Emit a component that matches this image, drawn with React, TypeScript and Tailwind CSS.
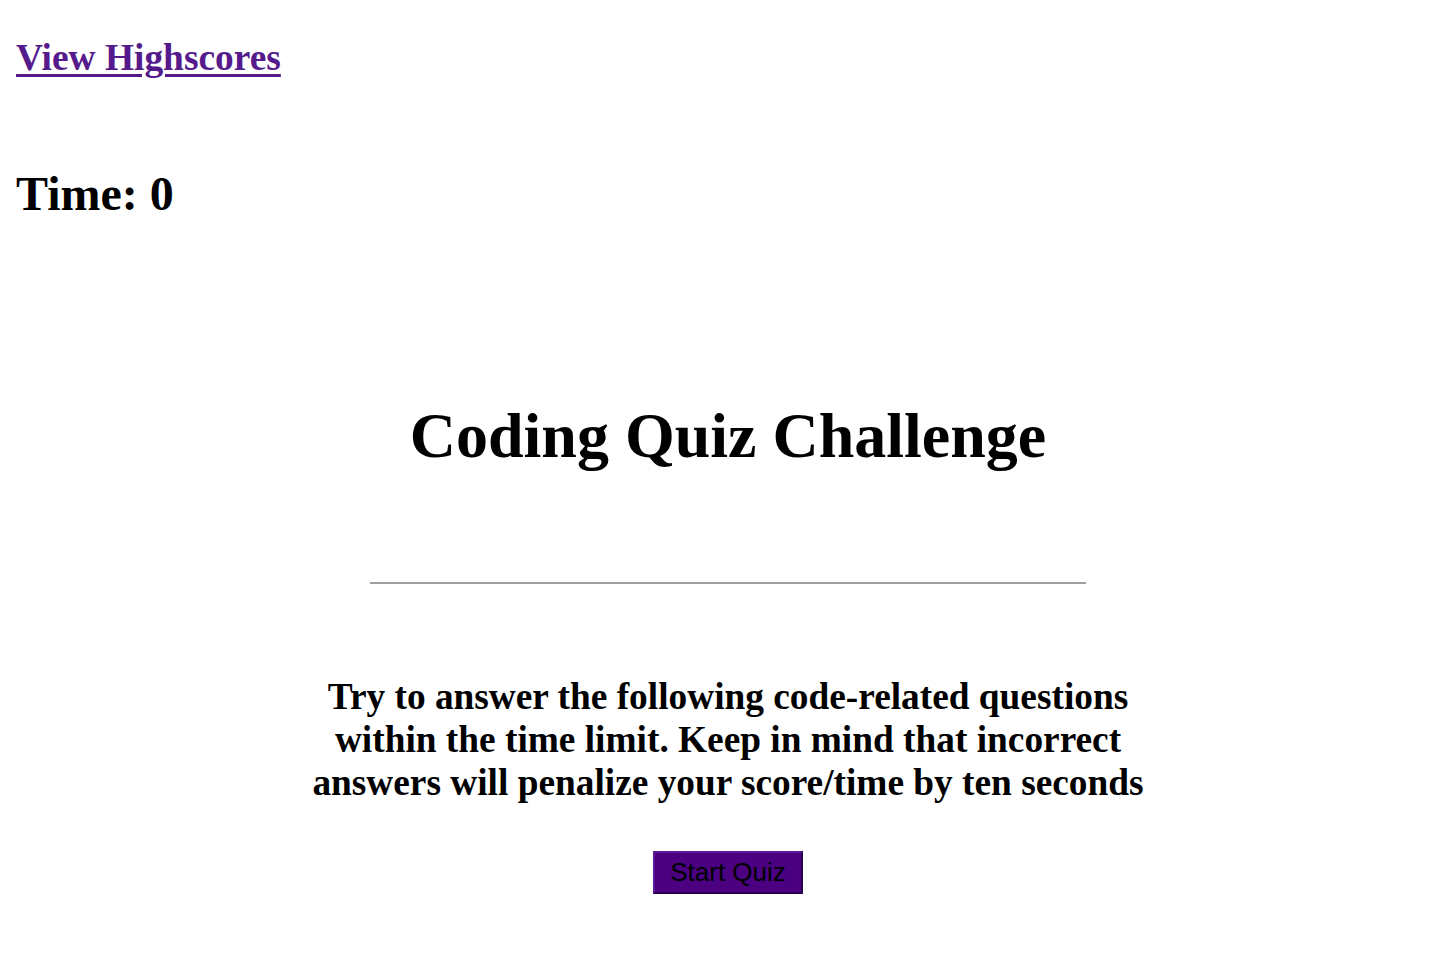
export default function App() {
  return (
    <div className="min-h-[968px] bg-white text-black font-['Liberation_Serif',serif]">
      <header className="px-4 pt-[28px]">
        <a href="#" className="text-[37.4px] font-bold leading-[60px] text-[#551a8b] underline decoration-[3px] underline-offset-[4px]">
          View Highscores
        </a>
        <div className="mt-[76px] text-[48px] font-bold leading-[60px]">Time: 0</div>
      </header>
      <main className="flex flex-col items-center">
        <h1 className="mt-[172px] text-[64px] font-bold leading-[80px]">Coding Quiz Challenge</h1>
        <hr className="mt-[106px] w-[716px] border-t-2 border-[#a0a0a0]" />
        <p className="mt-[91px] w-[880px] text-center text-[37.35px] font-bold leading-[43px]">
          Try to answer the following code-related questions within the time limit. Keep in mind that incorrect answers will penalize your score/time by ten seconds
        </p>
        <button className="mt-[47px] h-[43px] w-[150px] border-2 border-[#5a1a9a] border-r-[#2a0050] border-b-[#2a0050] bg-[#4b0082] font-['Liberation_Sans',sans-serif] text-[26px] text-black">
          Start Quiz
        </button>
      </main>
    </div>
  );
}
